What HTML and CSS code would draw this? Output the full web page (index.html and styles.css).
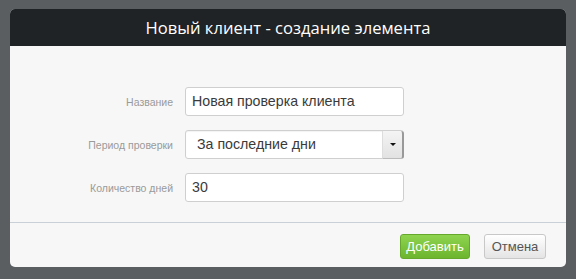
FILE: index.html
```html
<!DOCTYPE html>
<html lang="ru">
<head>
    <meta charset="utf-8" />
    <title>Новый клиент</title>
    <link rel="stylesheet" href="styles.css">
</head>
<body>
    <div class="dialog">
        <div class="dialog-header">Новый клиент - создание элемента</div>
        <div class="dialog-body">
            <div class="row">
                <label class="label">Название</label>
                <div class="input">Новая проверка клиента</div>
            </div>
            <div class="row">
                <label class="label">Период проверки</label>
                <div class="select">
                    <span class="select-text">За последние дни</span>
                    <span class="select-btn"><span class="caret"></span></span>
                </div>
            </div>
            <div class="row">
                <label class="label">Количество дней</label>
                <div class="input">30</div>
            </div>
        </div>
        <div class="dialog-footer">
            <button class="btn btn-ok">Добавить</button>
            <button class="btn btn-cancel">Отмена</button>
        </div>
    </div>
</body>
</html>
```

FILE: styles.css
```css
body {
    margin: 0;
    background: #5a5e61;
    font-family: "Liberation Sans", Arial, sans-serif;
    height: 279px;
}

.dialog {
    margin: 9px 10px 0 10px;
    width: 556px;
    height: 258px;
    background: #f7f7f7;
    border-radius: 5px;
    overflow: hidden;
    display: flex;
    flex-direction: column;
}

.dialog-header {
    height: 37px;
    background: #202326;
    color: #fff;
    font-family: "Open Sans", "Noto Sans", sans-serif;
    font-size: 16.6px;
    line-height: 37px;
    text-align: center;
}

.dialog-body {
    padding: 41px 0 0 0;
    height: 135px;
    border-bottom: 1px solid #c9d0d8;
}

.row {
    display: flex;
    align-items: center;
    margin-bottom: 14px;
}

.label {
    width: 163px;
    text-align: right;
    padding-right: 12px;
    font-size: 10.5px;
    color: #9a9a9a;
}

.input,
.select {
    box-sizing: border-box;
    width: 219px;
    height: 29px;
    border: 1px solid #cfcfcf;
    border-radius: 3px;
    background: #fff;
    font-size: 14.2px;
    color: #3a3a3a;
    line-height: 27px;
    padding-left: 6px;
}

.select {
    display: flex;
    padding-left: 11px;
    box-shadow: inset 0 1px 1px rgba(0, 0, 0, 0.05);
}

.select-text {
    flex: 1;
}

.select-btn {
    width: 19px;
    height: 27px;
    background: linear-gradient(#f4f4f4, #e2e2e2);
    border-left: 1px solid #ddd;
    border-right: 2px solid #999;
    border-bottom: 1px solid #bbb;
    border-radius: 0 3px 3px 0;
    display: flex;
    align-items: center;
    justify-content: center;
    margin-right: -1px;
}

.caret {
    width: 0;
    height: 0;
    border-left: 3px solid transparent;
    border-right: 3px solid transparent;
    border-top: 3px solid #111;
}

.dialog-footer {
    display: flex;
    justify-content: flex-end;
    padding: 11px 20px 0 0;
    gap: 14px;
}

.btn {
    height: 25px;
    border-radius: 3px;
    font-family: "Liberation Sans", Arial, sans-serif;
    font-size: 13px;
    padding: 0;
}

.btn-ok {
    width: 70px;
    background: linear-gradient(#8fd450, #6cb52d);
    border: 1px solid #66a82b;
    color: #fff;
}

.btn-cancel {
    width: 62px;
    background: linear-gradient(#ffffff, #e4e4e4);
    border: 1px solid #c8c8c8;
    color: #555;
}
```
